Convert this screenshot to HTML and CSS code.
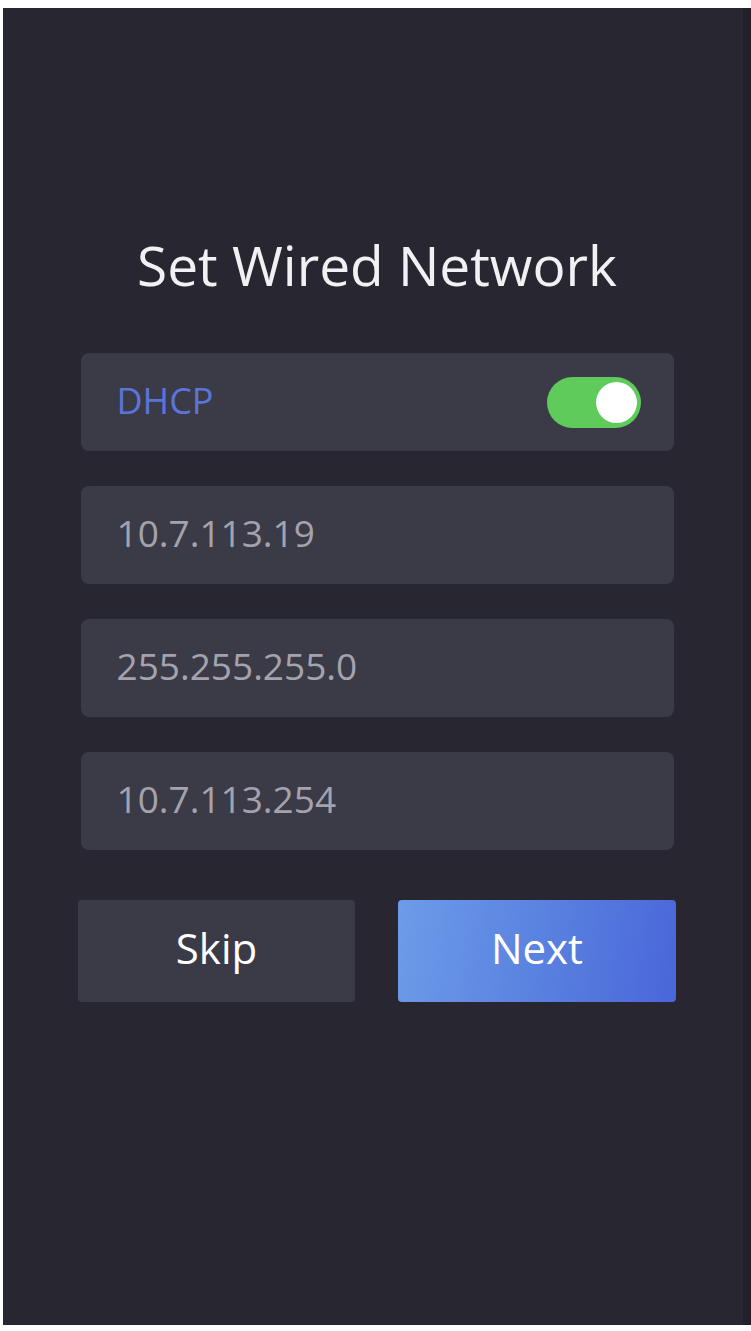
FILE: index.html
```html
<!DOCTYPE html>
<html lang="en">
<head>
    <meta charset="UTF-8">
    <meta name="viewport" content="width=device-width, initial-scale=1.0">
    <title>Set Wired Network</title>
    <link rel="stylesheet" href="styles.css">
</head>
<body>
    <div class="screen">
        <h1>Set Wired Network</h1>

        <div class="fields">
            <div class="field field-switch">
                <span class="field-label">DHCP</span>
                <span class="toggle on"><span class="knob"></span></span>
            </div>
            <div class="field">
                <span class="field-value">10.7.113.19</span>
            </div>
            <div class="field">
                <span class="field-value">255.255.255.0</span>
            </div>
            <div class="field">
                <span class="field-value">10.7.113.254</span>
            </div>
        </div>

        <div class="actions">
            <button type="button" class="btn btn-skip">Skip</button>
            <button type="button" class="btn btn-next">Next</button>
        </div>
    </div>
</body>
</html>
```

FILE: styles.css
```css
:root {
    --screen-bg: #272631;
    --field-bg: #3b3a47;
    --label-blue: #5b74da;
    --value-gray: #a4a3ad;
    --switch-green: #5fcb5b;
}

html, body {
    margin: 0;
    padding: 0;
    background: #ffffff;
}

body {
    font-family: 'Open Sans', 'Noto Sans', sans-serif;
    padding: 8px 0 6px 3px;
}

.screen {
    height: 1317px;
    background: var(--screen-bg);
    box-shadow: inset -8px 0 0 #22212a;
    display: flex;
    flex-direction: column;
    align-items: center;
}

h1 {
    margin: 219px 0 0;
    font-size: 55px;
    font-weight: 400;
    line-height: 75px;
    color: #f1f1f4;
}

.fields {
    width: 593px;
    margin-top: 51px;
    display: flex;
    flex-direction: column;
    gap: 35px;
}

.field {
    height: 98px;
    box-sizing: border-box;
    background: var(--field-bg);
    border-radius: 8px;
    padding: 0 33px 6px 36px;
    display: flex;
    align-items: center;
    justify-content: space-between;
}

.field-switch {
    padding-bottom: 0;
}

.field-label {
    font-size: 36px;
    color: var(--label-blue);
    margin-top: -4px;
}

.field-value {
    font-size: 37px;
    color: var(--value-gray);
}

.toggle {
    width: 94px;
    height: 51px;
    border-radius: 26px;
    background: #55545f;
    position: relative;
}

.toggle.on {
    background: var(--switch-green);
}

.knob {
    position: absolute;
    top: 5px;
    left: 5px;
    width: 41px;
    height: 41px;
    border-radius: 50%;
    background: #ffffff;
}

.toggle.on .knob {
    left: auto;
    right: 4px;
}

.actions {
    width: 598px;
    margin-top: 50px;
    display: flex;
    justify-content: space-between;
}

.btn {
    width: 277px;
    height: 102px;
    border: none;
    border-radius: 4px;
    font-family: inherit;
    font-size: 42px;
    color: #ffffff;
    padding: 0 0 8px;
    cursor: pointer;
}

.btn-skip {
    background: var(--field-bg);
}

.btn-next {
    width: 278px;
    background: linear-gradient(100deg, #6d9ce9 0%, #5a82e0 50%, #4a66d9 100%);
}
```
